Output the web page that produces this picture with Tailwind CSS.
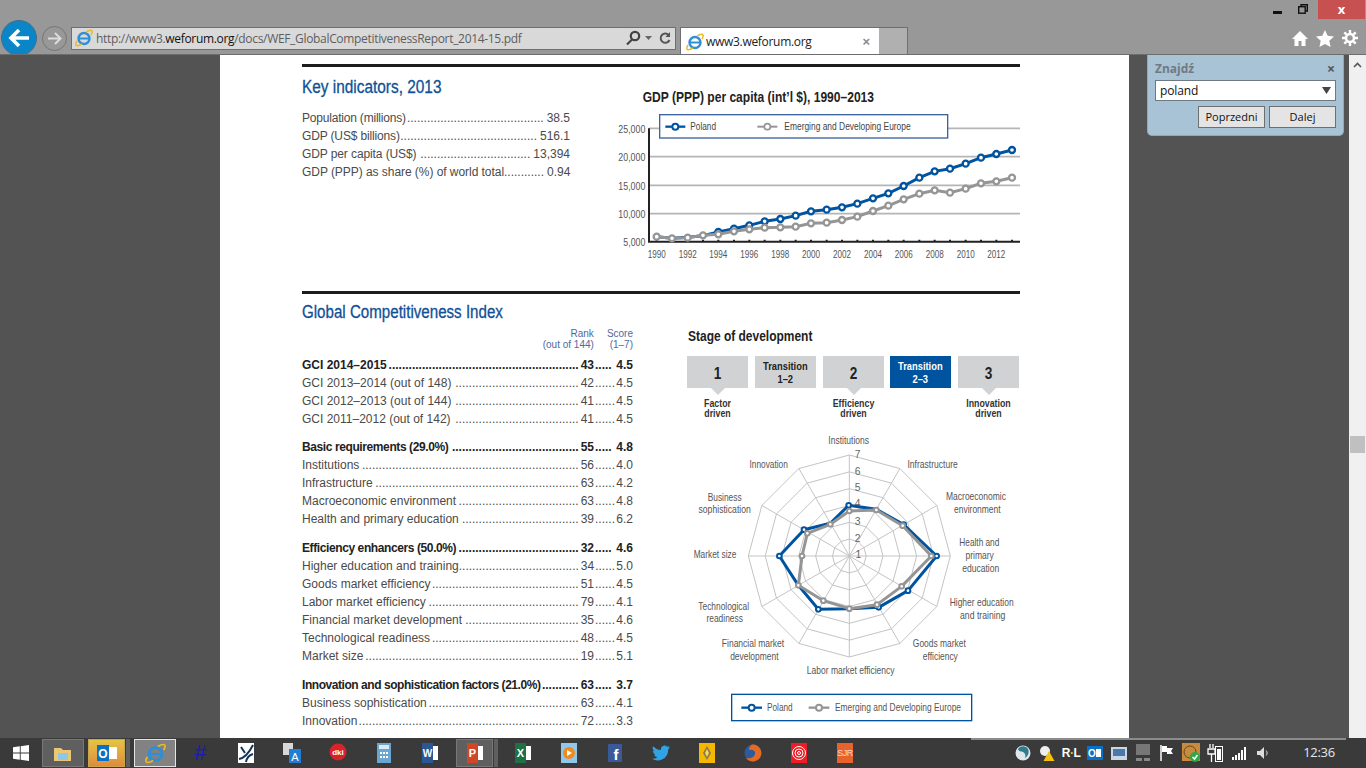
<!DOCTYPE html>
<html lang="pl">
<head>
<meta charset="utf-8">
<title>GCI</title>
<script src="https://cdn.jsdelivr.net/npm/@tailwindcss/browser@4"></script>
</head>
<body class="w-[1366px] h-[768px] overflow-hidden bg-[#535353] font-['Liberation_Sans',sans-serif]">
<div class="flex flex-col h-[768px]">

<!-- browser chrome -->
<header class="h-[55px] shrink-0 bg-[#989898] border-b border-[#6d6d6d] overflow-hidden">
  <div class="h-[20px] flex justify-end items-start pr-[1px]">
    <svg class="mt-[11px] mr-[16px]" width="9" height="3"><rect width="9" height="3" fill="#111"/></svg>
    <svg class="mt-[4px] mr-[10px]" width="10" height="10" fill="none" stroke="#111" stroke-width="1.4"><rect x="0.7" y="2.7" width="6.5" height="6.5"/><path d="M3 2.5V.7h6.3V7H7.5"/></svg>
    <div class="w-[47px] h-[19px] bg-[#c75050] flex items-center justify-center text-white text-[13px] leading-[19px] font-bold font-['Open_Sans',sans-serif]">x</div>
  </div>
  <div class="h-[36px] flex items-center pl-[1px]">
    <div class="w-[36px] h-[36px] rounded-full bg-[#0a86c8] border border-[#3f6f8c] flex items-center justify-center shrink-0">
      <svg width="22" height="20" viewBox="0 0 22 20" fill="none" stroke="#fff" stroke-width="3.6"><path d="M11 2 3 10l8 8M3 10h18"/></svg>
    </div>
    <div class="ml-[5px] w-[25px] h-[25px] rounded-full border border-[#757575] flex items-center justify-center shrink-0">
      <svg width="15" height="13" viewBox="0 0 15 13" fill="none" stroke="#dcdcdc" stroke-width="2"><path d="M8 1l5.5 5.5L8 12M13 6.5H1"/></svg>
    </div>
    <div class="ml-[4px] w-[605px] h-[23px] bg-[#d9d9d9] border border-[#6f6f6f] flex items-center shrink-0">
      <svg class="ml-[3px]" width="18" height="18" viewBox="0 0 18 18"><circle cx="9" cy="9.500" r="5.500" fill="none" stroke="#2f8fd6" stroke-width="2.400"/><path d="M4 9.500h10" stroke="#2f8fd6" stroke-width="2"/><path d="M2 12C-1 17 2 18 7 15M11 3C16 0 19 1 16 6" fill="none" stroke="#e9b92c" stroke-width="1.500"/></svg>
      <span class="ml-[3px] text-[12px] leading-[21px] tracking-[-0.32px] text-[#5e5e5e] font-['Open_Sans',sans-serif] whitespace-nowrap">http://www3.<span class="text-[#111]">weforum.org</span>/docs/WEF_GlobalCompetitivenessReport_2014-15.pdf</span>
      <div class="ml-auto flex items-center gap-[4px] pr-[4px]">
        <svg width="16" height="16" viewBox="0 0 16 16" fill="none" stroke="#444" stroke-width="2.2"><circle cx="10" cy="6" r="4.2"/><path d="M7 9.5 2 14.5"/></svg>
        <svg width="7" height="4"><path d="M0 0h7L3.500 4z" fill="#666"/></svg>
        <svg class="ml-[3px]" width="12" height="14" viewBox="0 0 12 14" fill="none" stroke="#555" stroke-width="2"><path d="M10 4.500A4.600 4.600 0 1 0 10.500 9"/><path d="M11 1v5H6.500" fill="#555" stroke="none"/></svg>
      </div>
    </div>
    <div class="ml-[4px] self-start mt-[7px] w-[199px] h-[28px] bg-white border-t border-l border-[#6f6f6f] flex items-center shrink-0">
      <svg class="ml-[5px]" width="18" height="18" viewBox="0 0 18 18"><circle cx="9" cy="9.500" r="5.500" fill="none" stroke="#2f8fd6" stroke-width="2.400"/><path d="M4 9.500h10" stroke="#2f8fd6" stroke-width="2"/><path d="M2 12C-1 17 2 18 7 15M11 3C16 0 19 1 16 6" fill="none" stroke="#e9b92c" stroke-width="1.500"/></svg>
      <span class="ml-[2px] text-[12px] leading-[22px] tracking-[-0.3px] text-[#222] font-['Open_Sans',sans-serif] whitespace-nowrap">www3.weforum.org</span>
      <span class="ml-auto mr-[9px] text-[13px] font-bold text-[#8a8a8a] leading-[15px]">×</span>
    </div>
    <div class="self-start mt-[7px] w-[29px] h-[28px] bg-[#b0b0b0] border-t border-r border-[#6f6f6f] shrink-0"></div>
    <div class="ml-auto flex items-center gap-[8px] pr-[8px]">
      <svg width="16" height="15" viewBox="0 0 16 15" fill="#fff"><path d="M8 0 0 8h2.500v7H6.500v-5h3v5h4V8H16z"/></svg>
      <svg width="18" height="17" viewBox="0 0 18 17" fill="#fff"><path d="M9 0l2.700 5.800 6.300.7-4.700 4.300 1.300 6.200L9 13.900 3.400 17l1.300-6.200L0 6.500l6.300-.7z"/></svg>
      <svg width="16" height="16" viewBox="0 0 16 16" fill="none" stroke="#fff"><circle cx="8" cy="8" r="4" stroke-width="2.600"/><path d="M8 0v3M8 13v3M0 8h3M13 8h3M2.300 2.300l2.100 2.100M11.600 11.600l2.100 2.100M2.300 13.700l2.100-2.100M11.600 4.400l2.100-2.100" stroke-width="2.400"/></svg>
    </div>
  </div>
</header>

<!-- viewport -->
<div class="relative flex-1 min-h-0 flex overflow-hidden">
  <div class="w-[220px] shrink-0 bg-[#535353]"></div>

  <main class="w-[909px] shrink-0 bg-white pl-[82px] pr-[109px] pt-[9px] text-[12px] text-[#4a4a4a] overflow-hidden">
    <div class="h-[3px] bg-[#1c1c1c]"></div>

    <div class="flex">
      <section class="w-[298px] shrink-0">
        <h2 class="mt-[8px] h-[24px] leading-[24px] text-[18px] text-[#0f5096] [-webkit-text-stroke:0.3px_#0f5096] whitespace-nowrap"><span class="inline-block origin-left scale-x-[.855]">Key indicators, 2013</span></h2>
        <div class="mt-[10px] w-[268px]">
          <div class="flex h-[18px] leading-[18px]"><span class="shrink-0 tracking-[-0.2px]">Population (millions)</span><span class="flex-1 text-right whitespace-nowrap">.........................................</span><span class="shrink-0 pl-[3px]">38.5</span></div>
          <div class="flex h-[18px] leading-[18px]"><span class="shrink-0 tracking-[-0.15px]">GDP (US$ billions)</span><span class="flex-1 text-right whitespace-nowrap">.........................................</span><span class="shrink-0 pl-[3px]">516.1</span></div>
          <div class="flex h-[18px] leading-[18px]"><span class="shrink-0 tracking-[-0.1px]">GDP per capita (US$)</span><span class="flex-1 text-right whitespace-nowrap">.................................</span><span class="shrink-0 pl-[3px]">13,394</span></div>
          <div class="flex h-[18px] leading-[18px]"><span class="shrink-0 tracking-[-0.05px]">GDP (PPP) as share (%) of world total</span><span class="flex-1 text-right whitespace-nowrap">............</span><span class="shrink-0 pl-[3px]">0.94</span></div>
        </div>
      </section>
      <svg class="mt-[18px] shrink-0" width="420" height="180" viewBox="0 0 1260 540">
        <text x="128" y="52" font-size="42" font-weight="700" fill="#222" textLength="694" lengthAdjust="spacingAndGlyphs">GDP (PPP) per capita (int’l $), 1990–2013</text>
        <g stroke="#b5b5b5" stroke-width="5"><path d="M147 130H1260M147 215H1260M147 301H1260M147 386H1260"/></g>
        <path d="M147 130V470H1260" fill="none" stroke="#222" stroke-width="6"/>
        <path d="M170 470v-6M216 470v-6M263 470v-6M309 470v-6M355 470v-6M402 470v-6M448 470v-6M494 470v-6M541 470v-6M587 470v-6M633 470v-6M680 470v-6M726 470v-6M772 470v-6M819 470v-6M865 470v-6M911 470v-6M958 470v-6M1004 470v-6M1050 470v-6M1097 470v-6M1143 470v-6M1189 470v-6M1236 470v-6" stroke="#222" stroke-width="6"/>
        <g font-size="31" fill="#555" text-anchor="end">
          <text x="136" y="144" textLength="81" lengthAdjust="spacingAndGlyphs">25,000</text><text x="136" y="229" textLength="81" lengthAdjust="spacingAndGlyphs">20,000</text><text x="136" y="315" textLength="81" lengthAdjust="spacingAndGlyphs">15,000</text><text x="136" y="400" textLength="81" lengthAdjust="spacingAndGlyphs">10,000</text><text x="136" y="484" textLength="66" lengthAdjust="spacingAndGlyphs">5,000</text>
        </g>
        <g font-size="30" fill="#555" text-anchor="middle">
          <text x="170" y="518" textLength="54" lengthAdjust="spacingAndGlyphs">1990</text><text x="263" y="518" textLength="54" lengthAdjust="spacingAndGlyphs">1992</text><text x="355" y="518" textLength="54" lengthAdjust="spacingAndGlyphs">1994</text><text x="448" y="518" textLength="54" lengthAdjust="spacingAndGlyphs">1996</text><text x="541" y="518" textLength="54" lengthAdjust="spacingAndGlyphs">1998</text><text x="633" y="518" textLength="54" lengthAdjust="spacingAndGlyphs">2000</text><text x="726" y="518" textLength="54" lengthAdjust="spacingAndGlyphs">2002</text><text x="819" y="518" textLength="54" lengthAdjust="spacingAndGlyphs">2004</text><text x="911" y="518" textLength="54" lengthAdjust="spacingAndGlyphs">2006</text><text x="1004" y="518" textLength="54" lengthAdjust="spacingAndGlyphs">2008</text><text x="1097" y="518" textLength="54" lengthAdjust="spacingAndGlyphs">2010</text><text x="1189" y="518" textLength="54" lengthAdjust="spacingAndGlyphs">2012</text>
        </g>
        <polyline fill="none" stroke="#00549f" stroke-width="9" points="170,455 216,460 263,457 309,452 355,441 402,431 448,421 494,409 541,402 587,392 633,379 680,374 726,367 772,356 819,340 865,325 911,303 958,278 1004,259 1050,251 1097,236 1143,218 1189,207 1236,195"/>
        <g fill="#fff" stroke="#00549f" stroke-width="7">
          <circle cx="355" cy="441" r="9"/><circle cx="402" cy="431" r="9"/><circle cx="448" cy="421" r="9"/><circle cx="494" cy="409" r="9"/><circle cx="541" cy="402" r="9"/><circle cx="587" cy="392" r="9"/><circle cx="633" cy="379" r="9"/><circle cx="680" cy="374" r="9"/><circle cx="726" cy="367" r="9"/><circle cx="772" cy="356" r="9"/><circle cx="819" cy="340" r="9"/><circle cx="865" cy="325" r="9"/><circle cx="911" cy="303" r="9"/><circle cx="958" cy="278" r="9"/><circle cx="1004" cy="259" r="9"/><circle cx="1050" cy="251" r="9"/><circle cx="1097" cy="236" r="9"/><circle cx="1143" cy="218" r="9"/><circle cx="1189" cy="207" r="9"/><circle cx="1236" cy="195" r="9"/>
        </g>
        <polyline fill="none" stroke="#959595" stroke-width="9" points="170,455 216,460 263,458 309,451 355,448 402,439 448,433 494,428 541,427 587,425 633,415 680,413 726,405 772,395 819,378 865,362 911,343 958,326 1004,316 1050,323 1097,311 1143,295 1189,289 1236,278"/>
        <g fill="#fff" stroke="#959595" stroke-width="7">
          <circle cx="170" cy="455" r="9"/><circle cx="216" cy="460" r="9"/><circle cx="263" cy="458" r="9"/><circle cx="309" cy="451" r="9"/><circle cx="355" cy="448" r="9"/><circle cx="402" cy="439" r="9"/><circle cx="448" cy="433" r="9"/><circle cx="494" cy="428" r="9"/><circle cx="541" cy="427" r="9"/><circle cx="587" cy="425" r="9"/><circle cx="633" cy="415" r="9"/><circle cx="680" cy="413" r="9"/><circle cx="726" cy="405" r="9"/><circle cx="772" cy="395" r="9"/><circle cx="819" cy="378" r="9"/><circle cx="865" cy="362" r="9"/><circle cx="911" cy="343" r="9"/><circle cx="958" cy="326" r="9"/><circle cx="1004" cy="316" r="9"/><circle cx="1050" cy="323" r="9"/><circle cx="1097" cy="311" r="9"/><circle cx="1143" cy="295" r="9"/><circle cx="1189" cy="289" r="9"/><circle cx="1236" cy="278" r="9"/>
        </g>
        <rect x="179" y="89" width="864" height="70" fill="#fff" stroke="#3d62a0" stroke-width="4"/>
        <path d="M196 125H256" stroke="#00549f" stroke-width="7"/><circle cx="226" cy="125" r="9" fill="#fff" stroke="#00549f" stroke-width="6"/>
        <text x="271" y="134" font-size="30" fill="#444" textLength="77" lengthAdjust="spacingAndGlyphs">Poland</text>
        <path d="M472 125H532" stroke="#959595" stroke-width="6"/><circle cx="502" cy="125" r="9" fill="#fff" stroke="#959595" stroke-width="5"/>
        <text x="553" y="134" font-size="30" fill="#444" textLength="379" lengthAdjust="spacingAndGlyphs">Emerging and Developing Europe</text>
      </svg>
    </div>

    <div class="mt-[26px] h-[3px] bg-[#1c1c1c]"></div>
    <h2 class="mt-[7px] h-[23px] leading-[23px] text-[18px] text-[#0f5096] [-webkit-text-stroke:0.3px_#0f5096] whitespace-nowrap"><span class="inline-block origin-left scale-x-[.84]">Global Competitiveness Index</span></h2>

    <div class="flex">
      <section class="w-[331px] shrink-0">
        <div class="mt-[4px] h-[22px] flex justify-end text-[10px] leading-[11px] text-[#4f6aa0] text-right">
          <span>Rank<br>(out of 144)</span><span class="ml-[13px]">Score<br>(1–7)</span>
        </div>
        <div class="mt-[6px]">
          <div class="flex h-[18px] leading-[18px] font-bold text-[#222]"><span class="shrink-0">GCI 2014–2015</span><span class="flex-1 text-right whitespace-nowrap">.........................................................</span><span class="shrink-0 pl-[2px]">43</span><span class="w-[22px] pl-[1px] whitespace-nowrap">.....</span><span class="w-[17px] text-right">4.5</span></div>
          <div class="flex h-[18px] leading-[18px]"><span class="shrink-0">GCI 2013–2014 (out of 148)</span><span class="flex-1 text-right whitespace-nowrap">.....................................</span><span class="shrink-0 pl-[2px]">42</span><span class="w-[22px] pl-[1px] whitespace-nowrap">......</span><span class="w-[17px] text-right">4.5</span></div>
          <div class="flex h-[18px] leading-[18px]"><span class="shrink-0">GCI 2012–2013 (out of 144)</span><span class="flex-1 text-right whitespace-nowrap">.....................................</span><span class="shrink-0 pl-[2px]">41</span><span class="w-[22px] pl-[1px] whitespace-nowrap">......</span><span class="w-[17px] text-right">4.5</span></div>
          <div class="flex h-[18px] leading-[18px]"><span class="shrink-0">GCI 2011–2012 (out of 142)</span><span class="flex-1 text-right whitespace-nowrap">.....................................</span><span class="shrink-0 pl-[2px]">41</span><span class="w-[22px] pl-[1px] whitespace-nowrap">......</span><span class="w-[17px] text-right">4.5</span></div>
        </div>
        <div class="mt-[10px]">
          <div class="flex h-[18px] leading-[18px] font-bold text-[#222]"><span class="shrink-0 tracking-[-0.4px]">Basic requirements (29.0%)</span><span class="flex-1 text-right whitespace-nowrap">......................................</span><span class="shrink-0 pl-[2px]">55</span><span class="w-[22px] pl-[1px] whitespace-nowrap">.....</span><span class="w-[17px] text-right">4.8</span></div>
          <div class="flex h-[18px] leading-[18px]"><span class="shrink-0">Institutions</span><span class="flex-1 text-right whitespace-nowrap">.................................................................</span><span class="shrink-0 pl-[2px]">56</span><span class="w-[22px] pl-[1px] whitespace-nowrap">......</span><span class="w-[17px] text-right">4.0</span></div>
          <div class="flex h-[18px] leading-[18px]"><span class="shrink-0">Infrastructure</span><span class="flex-1 text-right whitespace-nowrap">.............................................................</span><span class="shrink-0 pl-[2px]">63</span><span class="w-[22px] pl-[1px] whitespace-nowrap">......</span><span class="w-[17px] text-right">4.2</span></div>
          <div class="flex h-[18px] leading-[18px]"><span class="shrink-0">Macroeconomic environment</span><span class="flex-1 text-right whitespace-nowrap">....................................</span><span class="shrink-0 pl-[2px]">63</span><span class="w-[22px] pl-[1px] whitespace-nowrap">......</span><span class="w-[17px] text-right">4.8</span></div>
          <div class="flex h-[18px] leading-[18px]"><span class="shrink-0">Health and primary education</span><span class="flex-1 text-right whitespace-nowrap">...................................</span><span class="shrink-0 pl-[2px]">39</span><span class="w-[22px] pl-[1px] whitespace-nowrap">......</span><span class="w-[17px] text-right">6.2</span></div>
        </div>
        <div class="mt-[11px]">
          <div class="flex h-[18px] leading-[18px] font-bold text-[#222]"><span class="shrink-0 tracking-[-0.4px]">Efficiency enhancers (50.0%)</span><span class="flex-1 text-right whitespace-nowrap">....................................</span><span class="shrink-0 pl-[2px]">32</span><span class="w-[22px] pl-[1px] whitespace-nowrap">.....</span><span class="w-[17px] text-right">4.6</span></div>
          <div class="flex h-[18px] leading-[18px]"><span class="shrink-0">Higher education and training</span><span class="flex-1 text-right whitespace-nowrap">....................................</span><span class="shrink-0 pl-[2px]">34</span><span class="w-[22px] pl-[1px] whitespace-nowrap">......</span><span class="w-[17px] text-right">5.0</span></div>
          <div class="flex h-[18px] leading-[18px]"><span class="shrink-0">Goods market efficiency</span><span class="flex-1 text-right whitespace-nowrap">............................................</span><span class="shrink-0 pl-[2px]">51</span><span class="w-[22px] pl-[1px] whitespace-nowrap">......</span><span class="w-[17px] text-right">4.5</span></div>
          <div class="flex h-[18px] leading-[18px]"><span class="shrink-0">Labor market efficiency</span><span class="flex-1 text-right whitespace-nowrap">.............................................</span><span class="shrink-0 pl-[2px]">79</span><span class="w-[22px] pl-[1px] whitespace-nowrap">......</span><span class="w-[17px] text-right">4.1</span></div>
          <div class="flex h-[18px] leading-[18px]"><span class="shrink-0">Financial market development</span><span class="flex-1 text-right whitespace-nowrap">..................................</span><span class="shrink-0 pl-[2px]">35</span><span class="w-[22px] pl-[1px] whitespace-nowrap">......</span><span class="w-[17px] text-right">4.6</span></div>
          <div class="flex h-[18px] leading-[18px]"><span class="shrink-0">Technological readiness</span><span class="flex-1 text-right whitespace-nowrap">............................................</span><span class="shrink-0 pl-[2px]">48</span><span class="w-[22px] pl-[1px] whitespace-nowrap">......</span><span class="w-[17px] text-right">4.5</span></div>
          <div class="flex h-[18px] leading-[18px]"><span class="shrink-0">Market size</span><span class="flex-1 text-right whitespace-nowrap">................................................................</span><span class="shrink-0 pl-[2px]">19</span><span class="w-[22px] pl-[1px] whitespace-nowrap">......</span><span class="w-[17px] text-right">5.1</span></div>
        </div>
        <div class="mt-[11px]">
          <div class="flex h-[18px] leading-[18px] font-bold text-[#222]"><span class="shrink-0 tracking-[-0.45px]">Innovation and sophistication factors (21.0%)</span><span class="flex-1 text-right whitespace-nowrap">...........</span><span class="shrink-0 pl-[2px]">63</span><span class="w-[22px] pl-[1px] whitespace-nowrap">.....</span><span class="w-[17px] text-right">3.7</span></div>
          <div class="flex h-[18px] leading-[18px]"><span class="shrink-0">Business sophistication</span><span class="flex-1 text-right whitespace-nowrap">.............................................</span><span class="shrink-0 pl-[2px]">63</span><span class="w-[22px] pl-[1px] whitespace-nowrap">......</span><span class="w-[17px] text-right">4.1</span></div>
          <div class="flex h-[18px] leading-[18px]"><span class="shrink-0">Innovation</span><span class="flex-1 text-right whitespace-nowrap">..................................................................</span><span class="shrink-0 pl-[2px]">72</span><span class="w-[22px] pl-[1px] whitespace-nowrap">......</span><span class="w-[17px] text-right">3.3</span></div>
        </div>
      </section>

      <section class="ml-[54px] w-[333px] shrink-0">
        <h3 class="ml-[1px] h-[24px] leading-[24px] text-[14px] font-bold text-[#222] whitespace-nowrap"><span class="inline-block origin-left scale-x-[.855]">Stage of development</span></h3>
        <div class="mt-[8px] h-[74px] flex gap-[7px] text-center text-[10px] leading-[10px] font-bold text-[#333]">
          <div class="w-[61px]">
            <div class="h-[32px] pt-[3px] bg-[#d1d2d4] flex items-center justify-center text-[16px] text-[#222]"><span class="inline-block scale-x-[.85]">1</span></div>
            <svg class="mx-auto" width="14" height="7"><path d="M0 0h14L7 7z" fill="#d1d2d4"/></svg>
            <div class="mt-[4px] scale-x-[.88]">Factor<br>driven</div>
          </div>
          <div class="w-[61px] h-[32px] pt-[2px] bg-[#d1d2d4] flex items-center justify-center text-[11px] leading-[13px] text-[#222]"><span class="inline-block scale-x-[.85]">Transition<br>1–2</span></div>
          <div class="w-[61px]">
            <div class="h-[32px] pt-[3px] bg-[#d1d2d4] flex items-center justify-center text-[16px] text-[#222]"><span class="inline-block scale-x-[.85]">2</span></div>
            <svg class="mx-auto" width="14" height="7"><path d="M0 0h14L7 7z" fill="#d1d2d4"/></svg>
            <div class="mt-[4px] scale-x-[.88]">Efficiency<br>driven</div>
          </div>
          <div class="-ml-px w-[61px] h-[32px] pt-[2px] bg-[#00549f] flex items-center justify-center text-[11px] leading-[13px] text-white"><span class="inline-block scale-x-[.85]">Transition<br>2–3</span></div>
          <div class="w-[61px]">
            <div class="h-[32px] pt-[3px] bg-[#d1d2d4] flex items-center justify-center text-[16px] text-[#222]"><span class="inline-block scale-x-[.85]">3</span></div>
            <svg class="mx-auto" width="14" height="7"><path d="M0 0h14L7 7z" fill="#d1d2d4"/></svg>
            <div class="mt-[4px] scale-x-[.88]">Innovation<br>driven</div>
          </div>
        </div>
        <svg class="ml-[3px]" width="330" height="300" viewBox="0 0 990 900">
          <g fill="none" stroke="#c4c4c4" stroke-width="1" transform="translate(478 378)">
            <polygon vector-effect="non-scaling-stroke" transform="scale(50.5)" points="0,-1 .5,-.866 .866,-.5 1,0 .866,.5 .5,.866 0,1 -.5,.866 -.866,.5 -1,0 -.866,-.5 -.5,-.866"/>
            <polygon vector-effect="non-scaling-stroke" transform="scale(101)" points="0,-1 .5,-.866 .866,-.5 1,0 .866,.5 .5,.866 0,1 -.5,.866 -.866,.5 -1,0 -.866,-.5 -.5,-.866"/>
            <polygon vector-effect="non-scaling-stroke" transform="scale(151.5)" points="0,-1 .5,-.866 .866,-.5 1,0 .866,.5 .5,.866 0,1 -.5,.866 -.866,.5 -1,0 -.866,-.5 -.5,-.866"/>
            <polygon vector-effect="non-scaling-stroke" transform="scale(202)" points="0,-1 .5,-.866 .866,-.5 1,0 .866,.5 .5,.866 0,1 -.5,.866 -.866,.5 -1,0 -.866,-.5 -.5,-.866"/>
            <polygon vector-effect="non-scaling-stroke" transform="scale(252.5)" points="0,-1 .5,-.866 .866,-.5 1,0 .866,.5 .5,.866 0,1 -.5,.866 -.866,.5 -1,0 -.866,-.5 -.5,-.866"/>
            <polygon vector-effect="non-scaling-stroke" transform="scale(303)" points="0,-1 .5,-.866 .866,-.5 1,0 .866,.5 .5,.866 0,1 -.5,.866 -.866,.5 -1,0 -.866,-.5 -.5,-.866"/>
            <path vector-effect="non-scaling-stroke" d="M0-303V303M151.500-262.400-151.500 262.400M262.400-151.500-262.400 151.500M-303 0H303M-262.400-151.500 262.400 151.500M-151.500-262.400 151.500 262.400"/>
          </g>
          <g font-size="31" fill="#666" text-anchor="middle">
            <text x="503" y="85">7</text><text x="503" y="136">6</text><text x="503" y="183">5</text><text x="503" y="231">4</text><text x="503" y="285">3</text><text x="503" y="336">2</text><text x="505" y="385">1</text>
          </g>
          <polygon fill="none" stroke="#00549f" stroke-width="9" stroke-linejoin="round" points="476,226 559,238 641,284 740,378 654,482 566,532 478,536 385,538 325,466 268,378 342,299 421,280"/>
          <g fill="#fff" stroke="#00549f" stroke-width="6">
            <circle cx="476" cy="226" r="7"/><circle cx="641" cy="284" r="7"/><circle cx="740" cy="378" r="7"/><circle cx="654" cy="482" r="7"/><circle cx="566" cy="532" r="7"/><circle cx="385" cy="538" r="7"/><circle cx="268" cy="378" r="7"/><circle cx="342" cy="299" r="7"/>
          </g>
          <polygon fill="none" stroke="#959595" stroke-width="9" stroke-linejoin="round" points="478,243 559,240 638,287 724,378 635,469 561,524 478,536 400,512 325,466 336,378 352,310 421,283"/>
          <g fill="#fff" stroke="#959595" stroke-width="6">
            <circle cx="478" cy="243" r="7"/><circle cx="559" cy="240" r="7"/><circle cx="638" cy="287" r="7"/><circle cx="724" cy="378" r="7"/><circle cx="635" cy="469" r="7"/><circle cx="561" cy="524" r="7"/><circle cx="478" cy="536" r="7"/><circle cx="400" cy="512" r="7"/><circle cx="325" cy="466" r="7"/><circle cx="336" cy="378" r="7"/><circle cx="352" cy="310" r="7"/><circle cx="421" cy="283" r="7"/>
          </g>
          <g font-size="31" fill="#555" text-anchor="middle">
            <text x="476" y="41" textLength="122" lengthAdjust="spacingAndGlyphs">Institutions</text>
            <text x="728" y="113" textLength="151" lengthAdjust="spacingAndGlyphs">Infrastructure</text>
            <text x="236" y="113" textLength="115" lengthAdjust="spacingAndGlyphs">Innovation</text>
            <text x="858" y="209" textLength="180" lengthAdjust="spacingAndGlyphs">Macroeconomic</text><text x="862" y="248" textLength="140" lengthAdjust="spacingAndGlyphs">environment</text>
            <text x="868" y="347" textLength="120" lengthAdjust="spacingAndGlyphs">Health and</text><text x="869" y="387" textLength="85" lengthAdjust="spacingAndGlyphs">primary</text><text x="872" y="425" textLength="111" lengthAdjust="spacingAndGlyphs">education</text>
            <text x="875" y="527" textLength="192" lengthAdjust="spacingAndGlyphs">Higher education</text><text x="878" y="566" textLength="136" lengthAdjust="spacingAndGlyphs">and training</text>
            <text x="748" y="651" textLength="159" lengthAdjust="spacingAndGlyphs">Goods market</text><text x="751" y="689" textLength="105" lengthAdjust="spacingAndGlyphs">efficiency</text>
            <text x="482" y="731" textLength="263" lengthAdjust="spacingAndGlyphs">Labor market efficiency</text>
            <text x="189" y="651" textLength="187" lengthAdjust="spacingAndGlyphs">Financial market</text><text x="193" y="689" textLength="145" lengthAdjust="spacingAndGlyphs">development</text>
            <text x="101" y="539" textLength="152" lengthAdjust="spacingAndGlyphs">Technological</text><text x="104" y="575" textLength="109" lengthAdjust="spacingAndGlyphs">readiness</text>
            <text x="75" y="383" textLength="128" lengthAdjust="spacingAndGlyphs">Market size</text>
            <text x="104" y="212" textLength="102" lengthAdjust="spacingAndGlyphs">Business</text><text x="104" y="248" textLength="157" lengthAdjust="spacingAndGlyphs">sophistication</text>
          </g>
          <rect x="125" y="793" width="720" height="79" fill="#fff" stroke="#00549f" stroke-width="4"/>
          <path d="M154 833H216" stroke="#00549f" stroke-width="7"/><circle cx="185" cy="833" r="9" fill="#fff" stroke="#00549f" stroke-width="6"/>
          <text x="231" y="844" font-size="31" fill="#555" textLength="77" lengthAdjust="spacingAndGlyphs">Poland</text>
          <path d="M356 833H418" stroke="#959595" stroke-width="7"/><circle cx="387" cy="833" r="9" fill="#fff" stroke="#959595" stroke-width="6"/>
          <text x="435" y="844" font-size="31" fill="#555" textLength="378" lengthAdjust="spacingAndGlyphs">Emerging and Developing Europe</text>
        </svg>
      </section>
    </div>
  </main>

  <div class="w-[220px] shrink-0 bg-[#535353]"></div>

  <!-- scrollbar -->
  <div class="w-[17px] shrink-0 bg-[#f0f0f0] relative">
    <svg class="mx-auto mt-[7px]" width="9" height="6" fill="none" stroke="#555" stroke-width="1.600"><path d="M1 5 4.500 1.500 8 5"/></svg>
    <div class="absolute left-[1px] top-[381px] w-[15px] h-[17px] bg-[#c0c0c0]"></div>
  </div>

  <!-- find panel -->
  <div class="absolute left-[1147px] top-0 w-[197px] h-[81px] bg-[#a8c3d6] border border-t-0 border-[#8ea9bc] rounded-b-[5px] px-[7px] font-['Open_Sans',sans-serif] text-[12px] text-[#111]">
    <div class="h-[25px] pt-[2px] flex items-center justify-between">
      <span class="font-bold text-[#6f7a84]">Znajdź</span>
      <span class="mr-[1px] font-bold text-[#555] text-[14px] leading-none">×</span>
    </div>
    <div class="h-[21px] bg-white border border-[#6f7a80] flex items-center justify-between pl-[4px] pr-[4px] text-[12px] tracking-[-0.1px]">
      <span>poland</span>
      <svg width="9" height="7"><path d="M0 0h9L4.500 7z" fill="#444"/></svg>
    </div>
    <div class="mt-[5px] flex justify-end gap-[4px] text-[11px]">
      <div class="w-[67px] h-[22px] border border-[#6f6f6f] bg-[#e4e4e4] flex items-center justify-center">Poprzedni</div>
      <div class="w-[67px] h-[22px] border border-[#6f6f6f] bg-[#e4e4e4] flex items-center justify-center">Dalej</div>
    </div>
  </div>
</div>

<!-- taskbar -->
<footer class="relative h-[30px] shrink-0 bg-[#3a3a3a] flex items-center">
  <div class="absolute left-[971px] top-0 w-[375px] h-[2px] bg-[#8c8c8c]"></div>
  <div class="w-[42px] h-[30px] flex items-center justify-center"><svg width="16" height="16" viewBox="0 0 16 16" fill="#fff"><path d="M0 2.300 6.800 1.300V7.500H0zM7.700 1.200 16 0V7.500H7.700zM0 8.500H6.800V14.700L0 13.700zM7.700 8.500H16V16L7.700 14.800z"/></svg></div>
  <div class="w-[42px] h-[28px] bg-[#5f5f5f] border border-[#787878] flex items-center justify-center"><svg width="18" height="18"><path d="M0 4h7l2 2h8v11H0z" fill="#e8c874"/><rect x="4" y="9" width="10" height="7" fill="#8fc7e8"/></svg></div>
  <div class="ml-[4px] w-[37px] h-[28px] bg-linear-to-b from-[#e3c544] to-[#e08a3c] border border-[#c9a64e] flex items-center justify-center"><svg width="20" height="18"><rect x="9" y="3" width="11" height="12" fill="#fff"/><rect y="1" width="12" height="16" fill="#0a72c4"/><text x="6" y="14" text-anchor="middle" font-size="12" font-weight="700" fill="#fff">O</text></svg></div>
  <div class="ml-[1px] w-[4px] h-[28px] bg-[#5f5f5f]"></div>
  <div class="ml-[4px] w-[42px] h-[28px] bg-[#828282] border border-[#e4e4e4] flex items-center justify-center"><svg width="21" height="21" viewBox="0 0 18 18"><circle cx="9" cy="9.500" r="5.500" fill="none" stroke="#2f8fd6" stroke-width="2.400"/><path d="M4 9.500h10" stroke="#2f8fd6" stroke-width="2"/><path d="M2 12C-1 17 2 18 7 15M11 3C16 0 19 1 16 6" fill="none" stroke="#e9b92c" stroke-width="1.500"/></svg></div>
  <div class="ml-[1px] w-[46px] flex justify-center"><span class="text-[22px] leading-[26px] italic text-[#1a1ab4]">#</span></div>
  <div class="w-[46px] flex justify-center"><svg width="16" height="20"><rect width="16" height="20" fill="#fff"/><path d="M1 16C7 15 11 10 15 2M3 4l4 6M8 19c1-5 3-7 7-8" fill="none" stroke="#12345a" stroke-width="2"/></svg></div>
  <div class="w-[46px] flex justify-center"><svg width="18" height="20"><rect x="0" y="0" width="10" height="12" fill="#d8d8d8"/><rect x="6" y="6" width="12" height="14" fill="#1f7fd6"/><text x="12" y="18" text-anchor="middle" font-size="11" fill="#fff">A</text></svg></div>
  <div class="w-[46px] flex justify-center"><svg width="20" height="20"><circle cx="10" cy="9" r="8.500" fill="#d8232a"/><text x="10" y="12" text-anchor="middle" font-size="8" font-weight="700" fill="#fff">dki</text></svg></div>
  <div class="w-[46px] flex justify-center"><svg width="14" height="20"><rect width="14" height="20" fill="#6aa6d0"/><rect x="2" y="2" width="10" height="4" fill="#d9ecf7"/><path d="M3 9h2v2H3zM6 9h2v2H6zM9 9h2v2H9zM3 13h2v2H3zM6 13h2v2H6zM9 13h2v2H9z" fill="#fff"/></svg></div>
  <div class="w-[46px] flex justify-center"><svg width="16" height="20"><rect x="6" y="3" width="10" height="14" fill="#fff"/><rect width="11" height="20" fill="#2b5797"/><text x="5.500" y="14" text-anchor="middle" font-size="10" font-weight="700" fill="#fff">W</text></svg></div>
  <div class="ml-[3px] w-[37px] h-[28px] bg-[#5f5f5f] border border-[#787878] flex items-center justify-center"><svg width="16" height="20"><rect x="6" y="3" width="10" height="14" fill="#fff"/><rect width="11" height="20" fill="#d04727"/><text x="5.500" y="14" text-anchor="middle" font-size="11" font-weight="700" fill="#fff">P</text></svg></div>
  <div class="ml-[1px] w-[4px] h-[28px] bg-[#5f5f5f]"></div>
  <div class="ml-[2px] w-[46px] flex justify-center"><svg width="16" height="20"><rect x="6" y="3" width="10" height="14" fill="#fff"/><rect width="11" height="20" fill="#1e7145"/><text x="5.500" y="14" text-anchor="middle" font-size="11" font-weight="700" fill="#fff">X</text></svg></div>
  <div class="w-[46px] flex justify-center"><svg width="16" height="20"><rect width="16" height="20" fill="#8fc8ea"/><circle cx="8" cy="10" r="6" fill="#f08a1d"/><path d="M6 7v6l5-3z" fill="#fff"/></svg></div>
  <div class="w-[46px] flex justify-center"><svg width="14" height="18"><rect width="14" height="18" rx="1" fill="#3b5998"/><text x="8" y="16" text-anchor="middle" font-size="15" font-weight="700" fill="#fff">f</text></svg></div>
  <div class="w-[46px] flex justify-center"><svg width="18" height="16" viewBox="0 0 24 20"><path d="M24 2.400a10 10 0 0 1-2.800.8 5 5 0 0 0 2.200-2.700 10 10 0 0 1-3.100 1.200A4.900 4.900 0 0 0 11.900 6 14 14 0 0 1 1.700.9 4.900 4.900 0 0 0 3.200 7.500a5 5 0 0 1-2.200-.6c0 2.400 1.700 4.400 3.900 4.900a5 5 0 0 1-2.200.1 4.900 4.900 0 0 0 4.600 3.400A10 10 0 0 1 0 17.800 14 14 0 0 0 21.500 5.400 10 10 0 0 0 24 2.400z" fill="#2fa3e6"/></svg></div>
  <div class="w-[46px] flex justify-center"><svg width="16" height="20"><rect width="16" height="20" fill="#f5b800"/><path d="M8 3 12 10 8 17 4 10z" fill="#8a7a4a"/><path d="M8 6 10 10 8 14 6 10z" fill="#f5d860"/></svg></div>
  <div class="w-[46px] flex justify-center"><svg width="18" height="18"><circle cx="9" cy="9" r="8.500" fill="#2c5a9e"/><path d="M9 .5A8.500 8.500 0 1 1 2 14c3 1 8 0 9-4S7 5 5 6c0-3 2-5.500 4-5.500z" fill="#e66a1f"/></svg></div>
  <div class="w-[46px] flex justify-center"><svg width="16" height="20"><rect width="16" height="20" fill="#ee1c25"/><g fill="none" stroke="#fff"><circle cx="8" cy="10" r="6.500"/><circle cx="8" cy="10" r="4"/><circle cx="8" cy="10" r="1.500"/></g></svg></div>
  <div class="w-[46px] flex justify-center"><div class="w-[16px] h-[20px] bg-[#e8632c] text-[#f7d9c8] text-[9px] tracking-[-0.5px] leading-[20px] text-center">SJR</div></div>

  <div class="ml-auto flex items-center pr-[3px]">
    <div class="w-[24px] flex justify-center"><svg width="16" height="16"><circle cx="8" cy="8" r="7.500" fill="#dfe7ea"/><path d="M3 4c3-4 8-3 10 0 2 4-1 8-3 9 1-3 0-5-2-6S4 7 3 4z" fill="#2e7d8f"/></svg></div>
    <div class="w-[24px] flex justify-center"><svg width="16" height="16"><circle cx="6" cy="6" r="5" fill="#eee"/><path d="M10 6l5.500 10h-11z" fill="#f4c20d"/></svg></div>
    <div class="w-[24px] flex justify-center"><span class="text-[12px] font-bold text-white leading-[14px] tracking-[-0.5px]">R<span class="text-[#f4c20d]">·</span>L</span></div>
    <div class="w-[24px] flex justify-center"><svg width="16" height="14"><rect width="16" height="14" fill="#0a72c4"/><rect x="9" y="3" width="5" height="8" fill="#fff"/><text x="5" y="11" text-anchor="middle" font-size="10" font-weight="700" fill="#fff">O</text></svg></div>
    <div class="w-[24px] flex justify-center"><svg width="16" height="13"><rect width="16" height="13" fill="#c9d6e4"/><rect x="2" y="2" width="12" height="7" fill="#4a78ac"/></svg></div>
    <div class="w-[24px] flex justify-center"><svg width="14" height="18"><rect width="14" height="11" fill="#777"/><rect x="0" y="14" width="6" height="3" fill="#888"/><rect x="8" y="14" width="6" height="3" fill="#888"/></svg></div>
    <div class="w-[24px] flex justify-center"><svg width="14" height="16"><path d="M1 0v16" stroke="#fff" stroke-width="1.500"/><path d="M2 1h5v2h6l-2 3 2 3H7V7H2z" fill="#fff"/></svg></div>
    <div class="w-[24px] flex justify-center"><svg width="18" height="20"><rect width="18" height="18" fill="#c98a3c"/><circle cx="8" cy="9" r="6" fill="none" stroke="#5e4a28"/><circle cx="13" cy="14" r="5" fill="#2ea84a"/><path d="M10.500 14l2 2 3-4" fill="none" stroke="#fff" stroke-width="1.500"/></svg></div>
    <div class="w-[24px] flex justify-center"><svg width="16" height="18" fill="none" stroke="#fff"><rect x="8.500" y="2.500" width="7" height="15"/><rect x="10" y="5" width="4" height="11" fill="#fff" stroke="none"/><path d="M3 0v4M6 0v4M1 5h7v5H1zM4.500 10v8" stroke-width="1.300"/></svg></div>
    <div class="w-[24px] flex justify-center"><svg width="15" height="13" fill="#fff"><rect y="10" width="2" height="3"/><rect x="3" y="8" width="2" height="5"/><rect x="6" y="6" width="2" height="7"/><rect x="9" y="3" width="2" height="10"/><rect x="12" y="0" width="2" height="13"/></svg></div>
    <div class="w-[24px] flex justify-center"><svg width="12" height="14" fill="#ddd"><path d="M0 5h3l4-4v12L3 9H0z"/><path d="M9 4.500c1.500 1.500 1.500 3.500 0 5" fill="none" stroke="#ddd"/></svg></div>
    <div class="w-[88px] text-center text-[13px] tracking-[-0.3px] text-[#e8e8e8] font-['Open_Sans',sans-serif]">12:36</div>
  </div>
</footer>
</div>
</body>
</html>
